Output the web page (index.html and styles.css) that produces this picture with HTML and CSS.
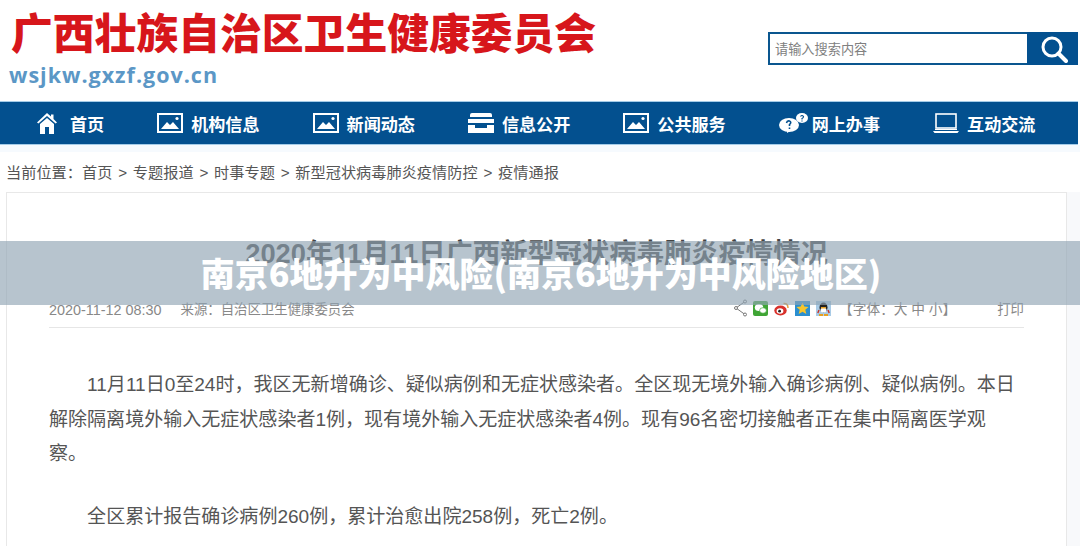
FILE: index.html
```html
<!DOCTYPE html>
<html lang="zh-CN">
<head>
    <meta charset="UTF-8">
    <meta name="viewport" content="width=device-width, initial-scale=1.0">
    <title>南京6地升为中风险</title>
    <link rel="stylesheet" href="styles.css">
</head>
<body>
    <header class="top">
        <div class="logo">
            <div class="logo-name">广西壮族自治区卫生健康委员会</div>
            <div class="logo-url">wsjkw.gxzf.gov.cn</div>
        </div>
        <form class="search">
            <input class="search-input" type="text" placeholder="请输入搜索内容">
            <button class="search-button" type="button" aria-label="搜索">
                <svg width="28" height="28" viewBox="0 0 28 28" fill="none" stroke="#fff"><circle cx="12" cy="12" r="9" stroke-width="3"/><path d="M18.5 18.5 L26 26" stroke-width="4" stroke-linecap="round"/></svg>
            </button>
        </form>
    </header>

    <nav class="nav">
        <a class="nav-item">
            <svg class="nav-home" width="20" height="21" viewBox="0 0 20 21" fill="#fff"><path d="M10 0 L14 3.6 V1.5 H16.5 V6 L20 9.5 L18.6 10.5 L10 3 L1.4 10.5 L0 9.5 Z M3 11 L10 5 L17 11 V21 H12 V14 H8 V21 H3 Z"/></svg>
            <span class="nav-home-text">首页</span>
        </a>
        <a class="nav-item">
            <svg width="26" height="20" viewBox="0 0 26 20"><rect x="1" y="1" width="24" height="18" fill="none" stroke="#fff" stroke-width="2"/><path d="M4 16 L10 9 L13 12 L16 9 L22 16 Z" fill="#fff"/><circle cx="20" cy="5.5" r="1.6" fill="#fff"/></svg>
            <span>机构信息</span>
        </a>
        <a class="nav-item">
            <svg width="26" height="20" viewBox="0 0 26 20"><rect x="1" y="1" width="24" height="18" fill="none" stroke="#fff" stroke-width="2"/><path d="M4 16 L10 9 L13 12 L16 9 L22 16 Z" fill="#fff"/><circle cx="20" cy="5.5" r="1.6" fill="#fff"/></svg>
            <span>新闻动态</span>
        </a>
        <a class="nav-item">
            <svg width="26" height="20" viewBox="0 0 26 20" fill="#fff"><path d="M4 0 H22 Q24 0 24 2 V4 H2 V2 Q2 0 4 0 Z M0 6 H26 V10 H0 Z M0 12 H7 V15 H19 V12 H26 V20 H0 Z"/></svg>
            <span>信息公开</span>
        </a>
        <a class="nav-item">
            <svg width="26" height="20" viewBox="0 0 26 20"><rect x="1" y="1" width="24" height="18" fill="none" stroke="#fff" stroke-width="2"/><path d="M4 16 L10 9 L13 12 L16 9 L22 16 Z" fill="#fff"/><circle cx="20" cy="5.5" r="1.6" fill="#fff"/></svg>
            <span>公共服务</span>
        </a>
        <a class="nav-item nav-item-tight">
            <svg width="29" height="20" viewBox="0 0 29 20"><ellipse cx="10" cy="12" rx="10" ry="7" fill="#fff"/><path d="M8 17 L8 20 L13 17 Z" fill="#fff"/><ellipse cx="23" cy="5" rx="6" ry="5" fill="#fff"/><path d="M7.5 10 Q8 7.5 10.5 8 Q13 9 10.5 11.5 V13 M10.5 14.5 V16" fill="none" stroke="#03508f" stroke-width="1.6"/><path d="M21.5 3.5 Q23 1.5 24.5 3.5 Q24.5 5 23 5.5 V6.5 M23 7.5 V8.5" fill="none" stroke="#03508f" stroke-width="1.2"/></svg>
            <span>网上办事</span>
        </a>
        <a class="nav-item">
            <svg width="26" height="20" viewBox="0 0 26 20" fill="none"><rect x="3" y="1" width="20" height="14" stroke="#fff" stroke-width="1.6"/><path d="M0 18 H26 L24.5 20 H1.5 Z" fill="#fff"/><path d="M2 16.5 H24" stroke="#fff"/></svg>
            <span>互动交流</span>
        </a>
    </nav>

    <main class="main">
        <div class="crumbs">当前位置：首页 &gt; 专题报道 &gt; 时事专题 &gt; 新型冠状病毒肺炎疫情防控 &gt; 疫情通报</div>
        <article class="card">
            <h1 class="card-title">2020年11月11日广西新型冠状病毒肺炎疫情情况</h1>
            <div class="meta">
                <div class="meta-left">
                    <span class="meta-date">2020-11-12 08:30</span>
                    <span>来源：自治区卫生健康委员会</span>
                </div>
                <div class="meta-right">
                    <svg class="share" width="13" height="18" viewBox="0 0 13 18" fill="none" stroke="#777"><path d="M11 2.5 L2 9 L11 15.5"/><circle cx="11" cy="2.5" r="1.5" fill="#fff"/><circle cx="2" cy="9" r="1.5" fill="#fff"/><circle cx="11" cy="15.5" r="1.5" fill="#fff"/></svg>
                    <svg class="share" width="15" height="15" viewBox="0 0 15 15"><rect width="15" height="15" rx="2" fill="#3fa535"/><ellipse cx="6" cy="6.5" rx="4.2" ry="3.5" fill="#fff"/><ellipse cx="10" cy="9.5" rx="3.4" ry="2.8" fill="#fff" stroke="#3fa535" stroke-width=".7"/></svg>
                    <svg class="share" width="15" height="15" viewBox="0 0 15 15"><ellipse cx="6.5" cy="9.5" rx="6.2" ry="5" fill="#d9312b"/><ellipse cx="6" cy="10" rx="3.4" ry="2.8" fill="#fff"/><circle cx="5.6" cy="10.2" r="1.4" fill="#222"/><path d="M9.5 2.5 Q14 2 14 7" fill="none" stroke="#e8a03a" stroke-width="1.5"/></svg>
                    <svg class="share" width="15" height="15" viewBox="0 0 15 15"><rect width="15" height="15" fill="#2b8fd0"/><path d="M7.5 1.5 L9.3 5.6 L13.6 6 L10.3 8.8 L11.3 13 L7.5 10.8 L3.7 13 L4.7 8.8 L1.4 6 L5.7 5.6 Z" fill="#f6c52c"/></svg>
                    <svg class="share" width="15" height="15" viewBox="0 0 15 15"><rect width="15" height="15" fill="#a9cbe6"/><ellipse cx="7.5" cy="6.5" rx="4" ry="5" fill="#222"/><ellipse cx="7.5" cy="9" rx="3" ry="2.6" fill="#fff"/><path d="M3 13 H7 V15 H3 Z M8 13 H12 V15 H8 Z M5 6 H10 V7.4 H5 Z" fill="#e8a021"/><path d="M3 9 L1.8 12 M12 9 L13.2 12" stroke="#c9332a" stroke-width="1.4"/></svg>
                    <span class="font-size">【字体：大 中 小】</span>
                    <span class="print">打印</span>
                </div>
            </div>
            <div class="content">
                <p>11月11日0至24时，我区无新增确诊、疑似病例和无症状感染者。全区现无境外输入确诊病例、疑似病例。本日解除隔离境外输入无症状感染者1例，现有境外输入无症状感染者4例。现有96名密切接触者正在集中隔离医学观察。</p>
                <p>全区累计报告确诊病例260例，累计治愈出院258例，死亡2例。</p>
            </div>
        </article>
    </main>

    <div class="band">南京6地升为中风险(南京6地升为中风险地区)</div>
</body>
</html>
```

FILE: styles.css
```css
html, body {
    margin: 0;
    height: 546px;
    overflow: hidden;
}

body {
    position: relative;
    background-color: #fff;
    font-family: "Liberation Sans", "Noto Sans CJK SC", sans-serif;
    color: #555;
}

.top {
    display: flex;
    justify-content: space-between;
    height: 101px;
    margin-right: 2px;
}

.logo {
    padding: 8px 0 0 11px;
}

.logo-name {
    font-family: "Noto Sans CJK SC", sans-serif;
    font-size: 41.8px;
    font-weight: 900;
    line-height: 46px;
    color: #d7161b;
    white-space: nowrap;
}

.logo-url {
    margin: 6px 0 0 -2px;
    font-family: "Open Sans", sans-serif;
    font-size: 21.5px;
    font-weight: 700;
    line-height: 30px;
    letter-spacing: 1px;
    color: #5b97c6;
}

.search {
    display: flex;
    width: 310px;
    height: 33px;
    margin-top: 32px;
}

.search-input {
    flex: 1;
    min-width: 0;
    box-sizing: border-box;
    border: 2px solid #0a568f;
    border-right: none;
    padding: 0 5px;
    font-family: "Noto Sans CJK SC", sans-serif;
    font-size: 13.2px;
    outline: none;
}

.search-input::placeholder {
    color: #808080;
}

.search-button {
    display: flex;
    align-items: center;
    justify-content: center;
    width: 51px;
    border: none;
    padding: 0 0 0 2px;
    background-color: #03508f;
}

.nav {
    display: flex;
    align-items: center;
    gap: 53px;
    height: 42px;
    margin-right: 2px;
    padding-left: 37px;
    border-top: 1px solid #a5cce8;
    border-bottom: 1px solid #a5cce8;
    background-color: #03508f;
}

.nav-item {
    display: flex;
    align-items: center;
    gap: 8px;
    color: #fff;
    font-family: "Noto Sans CJK SC", sans-serif;
    font-size: 17.1px;
    font-weight: 700;
    white-space: nowrap;
}

.nav-home-text {
    margin-left: 5px;
}

.nav-item-tight {
    gap: 4px;
}

.main {
    padding-top: 11px;
    border-top: 7px solid #f6fafe;
}

.crumbs {
    padding-left: 6px;
    font-size: 15.2px;
    line-height: 20px;
    word-spacing: 1.6px;
    color: #555;
}

.card {
    box-sizing: border-box;
    width: 1061px;
    height: 360px;
    margin: 9px 0 0 6px;
    padding: 0 42px;
    border: 1px solid #e8e8e8;
    box-shadow: 14px 0 0 #f8f9fb;
}

.card-title {
    margin: 41px 0 0;
    font-size: 27.3px;
    font-weight: 700;
    line-height: 40px;
    text-align: center;
    color: #444;
}

.meta {
    display: flex;
    justify-content: space-between;
    align-items: center;
    height: 38px;
    margin-top: 15px;
    border-bottom: 1px solid #e6e6e6;
    font-size: 13.4px;
    color: #888;
}

.meta-left {
    display: flex;
    align-items: center;
    gap: 19px;
}

.meta-date {
    margin-top: 3px;
    font-size: 14.4px;
}

.meta-right {
    display: flex;
    align-items: center;
    gap: 6px;
}

.font-size {
    margin-left: 2px;
    font-size: 13.7px;
}

.print {
    margin-left: 35px;
}

.content {
    margin-top: 40px;
    padding-right: 5px;
    font-size: 19.05px;
    line-height: 34.5px;
    color: #555;
}

.content p {
    margin: 0 0 28px;
    text-indent: 2em;
}

.band {
    position: absolute;
    left: 0;
    right: 0;
    top: 241px;
    height: 63px;
    padding: 0 0 1px 2px;
    display: flex;
    align-items: center;
    justify-content: center;
    background-color: rgba(145, 165, 180, 0.65);
    color: #fff;
    font-family: "Noto Sans CJK SC", sans-serif;
    font-size: 34px;
    font-weight: 900;
    white-space: nowrap;
}
```
